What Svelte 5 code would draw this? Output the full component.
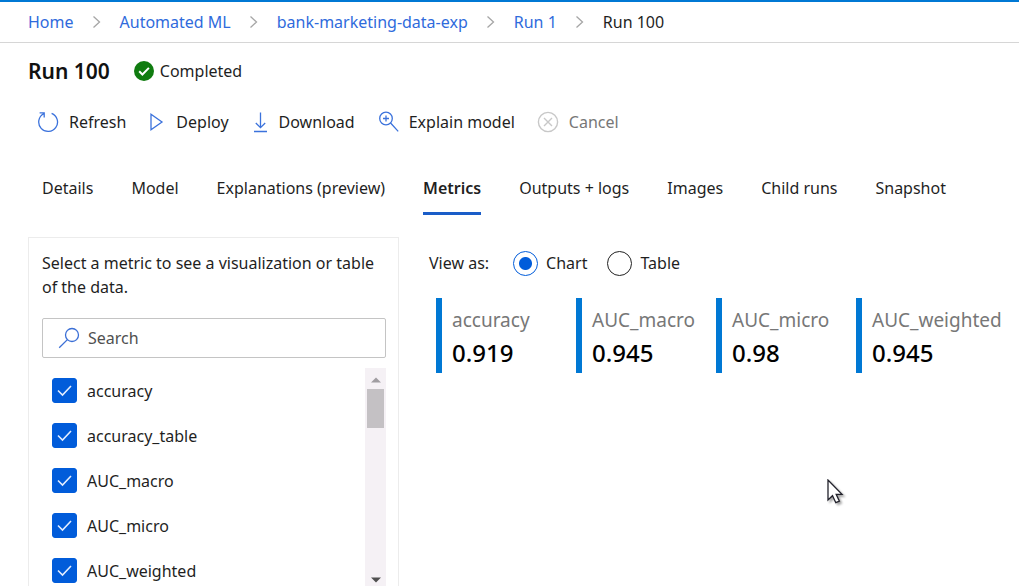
<script>
  const crumbs = ['Home', 'Automated ML', 'bank-marketing-data-exp', 'Run 1'];
  const tabs = ['Details', 'Model', 'Explanations (preview)', 'Metrics', 'Outputs + logs', 'Images', 'Child runs', 'Snapshot'];
  const cards = [
    { name: 'accuracy', value: '0.919' },
    { name: 'AUC_macro', value: '0.945' },
    { name: 'AUC_micro', value: '0.98' },
    { name: 'AUC_weighted', value: '0.945' }
  ];
  let metrics = $state(
    ['accuracy', 'accuracy_table', 'AUC_macro', 'AUC_micro', 'AUC_weighted'].map((name) => ({ name, on: true }))
  );
  let active = $state('Metrics');
  let view = $state('chart');
  let query = $state('');
</script>

<div class="page">
  <nav class="crumbs" aria-label="Breadcrumb">
    {#each crumbs as crumb}
      <a href="#top">{crumb}</a>
      <svg width="10" height="14" viewBox="0 0 10 14" aria-hidden="true"><path d="M1.5 1.5 7.5 7l-6 5.5" fill="none" stroke="#a6a6a6" stroke-width="1.3" /></svg>
    {/each}
    <span>Run 100</span>
  </nav>

  <header class="title">
    <h1>Run 100</h1>
    <div class="status">
      <svg width="20" height="20" viewBox="0 0 20 20" aria-hidden="true">
        <circle cx="10" cy="10" r="10" fill="#107c10" />
        <path d="m5.2 10.3 3.2 3.2 6.5-6.6" fill="none" stroke="#fff" stroke-width="2" />
      </svg>
      <span>Completed</span>
    </div>
  </header>

  <div class="toolbar">
    <button type="button">
      <svg class="blue" width="22" height="22" viewBox="0 0 22 22" aria-hidden="true">
        <path d="M6.6 2.8A9.4 9.4 0 1 0 14.6 2.3M2.6 1.8h4.600v4.600" />
      </svg>
      Refresh
    </button>
    <button type="button">
      <svg class="blue" width="18" height="22" viewBox="0 0 18 22" aria-hidden="true"><path d="M3 3.2v15.6L14 11z" /></svg>
      Deploy
    </button>
    <button type="button">
      <svg class="blue" width="18" height="22" viewBox="0 0 18 22" aria-hidden="true"><path d="M9.500 1.500v15M4.800 12l4.700 4.700 4.700-4.700M3 20.500h13" /></svg>
      Download
    </button>
    <button type="button">
      <svg class="blue" width="22" height="22" viewBox="0 0 22 22" aria-hidden="true">
        <circle cx="9" cy="7.500" r="6.300" /><path d="m13.600 12 7.600 8.400M9 4.500v6M6 7.500h6" />
      </svg>
      Explain model
    </button>
    <button type="button" disabled>
      <svg width="22" height="22" viewBox="0 0 22 22" fill="none" stroke="#c8c8c8" stroke-width="1.4" aria-hidden="true">
        <circle cx="11" cy="11" r="9.6" /><path d="m7 7 8 8M15 7l-8 8" />
      </svg>
      Cancel
    </button>
  </div>

  <div class="tabs" role="tablist">
    {#each tabs as tab}
      <button type="button" role="tab" aria-selected={active === tab} onclick={() => (active = tab)}>{tab}</button>
    {/each}
  </div>

  <main>
    <section class="panel">
      <p>Select a metric to see a visualization or table of the data.</p>
      <label class="search">
        <svg width="22" height="22" viewBox="0 0 22 22" aria-hidden="true">
          <circle cx="14" cy="8" r="6.5" fill="none" stroke="#3b6fd6" stroke-width="1.3" />
          <path d="M9.4 12.6 1.2 20.8" stroke="#3b6fd6" stroke-width="1.3" />
        </svg>
        <input type="text" placeholder="Search" aria-label="Search" bind:value={query} />
      </label>
      <div class="list">
        <div class="items">
          {#each metrics as metric}
            <label class="item">
              <input type="checkbox" bind:checked={metric.on} />
              <svg class="tick" width="25" height="25" viewBox="0 0 25 25" aria-hidden="true"><path d="m6 12.500 4.500 4.500 8.500-9" /></svg>
              <span>{metric.name}</span>
            </label>
          {/each}
        </div>
        <div class="scrollbar" aria-hidden="true">
          <svg width="10" height="6" viewBox="0 0 10 6"><path d="M0 5.5 5 .5l5 5z" fill="#a09da1" /></svg>
          <div class="thumb"></div>
          <svg class="down" width="10" height="6" viewBox="0 0 10 6"><path d="M0 .5 5 5.5l5-5z" fill="#505050" /></svg>
        </div>
      </div>
    </section>

    <section class="results">
      <div class="view" role="radiogroup" aria-labelledby="view-label">
        <span id="view-label">View as:</span>
        <label><input type="radio" name="view" value="chart" bind:group={view} />Chart</label>
        <label><input type="radio" name="view" value="table" bind:group={view} />Table</label>
      </div>
      <div class="cards">
        {#each cards as card}
          <article>
            <span class="name">{card.name}</span>
            <strong>{card.value}</strong>
          </article>
        {/each}
      </div>
    </section>
  </main>

  <svg class="cursor" width="20" height="28" viewBox="0 0 20 28" aria-hidden="true">
    <path d="M2 1v20l4.500-4.300 3.300 7 3.600-1.600-3.200-6.800H16z" fill="#fff" stroke="#22222c" stroke-width="1.300" />
  </svg>
</div>

<style>
  :global(body) {
    margin: 0;
    background: #fff;
  }
  .page {
    box-sizing: border-box;
    display: flex;
    flex-direction: column;
    height: 100vh;
    overflow: hidden;
    border-top: 2px solid #0078d4;
    color: #1f1f1f;
    font: 16px/24px "Noto Sans", "Open Sans", sans-serif;
  }
  button,
  input {
    margin: 0;
    font: inherit;
    color: inherit;
  }
  button {
    padding: 0;
    border: 0;
    background: none;
    white-space: nowrap;
  }
  svg {
    flex: none;
  }
  .crumbs {
    display: flex;
    align-items: center;
    gap: 18px;
    height: 40px;
    padding-left: 28px;
    border-bottom: 1px solid #d6d6d6;
    white-space: nowrap;
  }
  .crumbs a {
    color: #2f6bdc;
    text-decoration: none;
  }
  .title {
    display: flex;
    align-items: center;
    gap: 24px;
    height: 56px;
    padding-left: 28px;
  }
  h1 {
    margin: 0;
    font-size: 21px;
    font-weight: 600;
    color: #111;
  }
  .status {
    display: flex;
    align-items: center;
    gap: 6px;
  }
  .toolbar {
    display: flex;
    align-items: center;
    gap: 22px;
    height: 46px;
    padding-left: 37px;
  }
  .toolbar button {
    display: flex;
    align-items: center;
    gap: 10px;
  }
  .toolbar button:disabled {
    color: #777;
  }
  .blue {
    fill: none;
    stroke: #3b72dc;
    stroke-width: 1.3;
  }
  .tabs {
    display: flex;
    gap: 38px;
    margin-top: 16px;
    padding-left: 42px;
  }
  .tabs button {
    height: 54px;
    padding-top: 2px;
    border-bottom: 3px solid transparent;
  }
  .tabs button[aria-selected="true"] {
    border-color: #1a5dc8;
    font-weight: 600;
  }
  main {
    display: flex;
    flex: 1;
    gap: 30px;
    min-height: 0;
    margin-top: 22px;
    padding-left: 28px;
  }
  .panel {
    box-sizing: border-box;
    display: flex;
    flex-direction: column;
    flex: 0 0 371px;
    padding: 13px 12px 0 13px;
    border: 1px solid #ececec;
    border-bottom: 0;
  }
  .panel p {
    margin: 0 0 19px;
  }
  .search {
    box-sizing: border-box;
    display: flex;
    flex: none;
    align-items: center;
    gap: 8px;
    height: 40px;
    padding-left: 15px;
    border: 1px solid #c4c4c4;
    border-radius: 2px;
  }
  .search input {
    flex: 1;
    min-width: 0;
    padding: 0;
    border: 0;
    outline: 0;
    background: none;
  }
  .search input::placeholder {
    color: #505050;
    opacity: 1;
  }
  .list {
    display: flex;
    flex: 1;
    min-height: 0;
    margin-top: 10px;
  }
  .items {
    flex: 1;
    overflow: hidden;
    padding-left: 10px;
  }
  .item {
    display: grid;
    grid-template-columns: 25px 1fr;
    align-items: center;
    gap: 10px;
    height: 45px;
  }
  .item input {
    grid-area: 1 / 1;
    appearance: none;
    width: 25px;
    height: 25px;
    border: 1px solid #323130;
    border-radius: 3px;
  }
  .item input:checked {
    border-color: #015cda;
    background: #015cda;
  }
  .tick {
    grid-area: 1 / 1;
    fill: none;
    stroke: #e2edff;
    stroke-width: 1.6;
    pointer-events: none;
  }
  .scrollbar {
    box-sizing: border-box;
    display: flex;
    flex-direction: column;
    align-items: center;
    width: 21px;
    padding: 9px 0 3px;
    background: #f5f1f5;
  }
  .thumb {
    width: 17px;
    height: 39px;
    margin-top: 6px;
    background: #c4c1c4;
  }
  .down {
    margin-top: auto;
  }
  .results {
    flex: 1;
    padding-top: 13px;
  }
  .view {
    display: flex;
    align-items: center;
    gap: 20px;
    height: 26px;
  }
  #view-label {
    padding-right: 4px;
  }
  .view label {
    display: flex;
    align-items: center;
    gap: 8px;
  }
  .view input {
    appearance: none;
    box-sizing: border-box;
    width: 25px;
    height: 25px;
    border: 1px solid #222;
    border-radius: 50%;
  }
  .view input:checked {
    border-color: #015cda;
    background: radial-gradient(circle, #015cda 6px, transparent 7px);
  }
  .cards {
    display: grid;
    grid-template-columns: repeat(4, 140px);
    margin: 22px 0 0 7px;
  }
  article {
    display: flex;
    flex-direction: column;
    height: 65px;
    padding: 10px 0 0 10px;
    border-left: 6px solid #0078d4;
    white-space: nowrap;
  }
  .name {
    font-size: 19px;
    color: #777;
  }
  strong {
    font-size: 24px;
    font-weight: 500;
    line-height: 42px;
    color: #000;
  }
  .cursor {
    position: absolute;
    left: 826px;
    top: 479px;
    filter: drop-shadow(2px 2px 1px rgb(0 0 0 / 35%));
  }
</style>
